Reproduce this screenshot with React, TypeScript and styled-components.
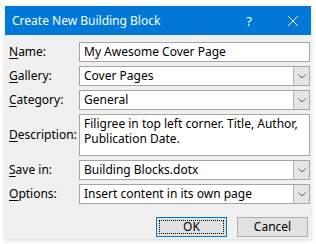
import styled, { createGlobalStyle } from 'styled-components';

const GlobalStyle = createGlobalStyle`
  html, body {
    margin: 0;
    padding: 0;
    background: #ffffff;
  }
  body {
    font-family: "Noto Sans", "Open Sans", Arial, sans-serif;
  }
`;

const Page = styled.div`
  padding: 6px 5px 0 5px;
  width: 316px;
  height: 244px;
  box-sizing: border-box;
`;

const Dialog = styled.div`
  width: 306px;
  background: #f0f0f0;
  box-shadow: 0 1px 4px rgba(0, 0, 0, 0.18);
`;

const TitleBar = styled.div`
  display: flex;
  align-items: center;
  height: 29px;
  background: #0078d7;
  color: #ffffff;
  padding: 0 13px 0 7px;
  font-size: 12px;
`;

const Title = styled.div`
  flex: 1;
`;

const HelpGlyph = styled.span`
  font-size: 13px;
  margin-right: 36px;
`;

const Body = styled.div`
  padding: 7px 1px 2px 4px;
`;

const Form = styled.div`
  display: grid;
  grid-template-columns: 70px 1fr;
  row-gap: 4px;
  align-items: center;
`;

const Label = styled.label`
  font-size: 12px;
  line-height: 16px;
  color: #000000;
  u {
    text-decoration: underline;
    text-underline-offset: 2px;
  }
`;

const Field = styled.div<{ $tall?: boolean }>`
  display: flex;
  align-items: ${(p) => (p.$tall ? 'flex-start' : 'center')};
  height: ${(p) => (p.$tall ? '42px' : '20px')};
  box-sizing: border-box;
  border: 1px solid #a5a5a5;
  background: #ffffff;
  font-size: 12px;
  color: #000000;
  line-height: ${(p) => (p.$tall ? '15px' : '16px')};
  padding: ${(p) => (p.$tall ? '1px 4px' : '0 0 0 4px')};
`;

const FieldText = styled.span`
  flex: 1;
  white-space: nowrap;
`;

const DropButton = styled.span`
  display: flex;
  align-items: center;
  justify-content: center;
  width: 16px;
  height: 100%;
  box-sizing: border-box;
  background: #e5e5e5;
  border-left: 1px solid #b5b5b5;
`;

const Buttons = styled.div`
  display: flex;
  justify-content: flex-end;
  gap: 10px;
  margin-top: 13px;
  padding-right: 2px;
`;

const Button = styled.button<{ $primary?: boolean }>`
  width: 71px;
  height: 20px;
  box-sizing: border-box;
  padding: 0;
  font-family: inherit;
  font-size: 12px;
  line-height: 16px;
  color: #000000;
  background: #e1e1e1;
  border: 1px solid ${(p) => (p.$primary ? '#0078d7' : '#adadad')};
  display: flex;
  align-items: center;
  justify-content: center;
`;

const FocusRing = styled.span`
  display: flex;
  align-items: center;
  justify-content: center;
  width: calc(100% - 4px);
  height: calc(100% - 4px);
  box-sizing: border-box;
  border: 1px dotted #000000;
`;

const Chevron = () => (
  <svg width="8" height="5" viewBox="0 0 8 5">
    <polyline points="0.5,0.5 4,4 7.5,0.5" fill="none" stroke="#606060" strokeWidth="1" />
  </svg>
);

const CloseIcon = () => (
  <svg width="10" height="10" viewBox="0 0 10 10">
    <line x1="0" y1="0" x2="10" y2="10" stroke="#ffffff" strokeWidth="1" />
    <line x1="10" y1="0" x2="0" y2="10" stroke="#ffffff" strokeWidth="1" />
  </svg>
);

const Select = ({ value }: { value: string }) => (
  <Field>
    <FieldText>{value}</FieldText>
    <DropButton>
      <Chevron />
    </DropButton>
  </Field>
);

const App = () => (
  <>
    <GlobalStyle />
    <Page>
      <Dialog>
        <TitleBar>
          <Title>Create New Building Block</Title>
          <HelpGlyph>?</HelpGlyph>
          <CloseIcon />
        </TitleBar>
        <Body>
          <Form>
            <Label>
              <u>N</u>ame:
            </Label>
            <Field>
              <FieldText>My Awesome Cover Page</FieldText>
            </Field>
            <Label>
              <u>G</u>allery:
            </Label>
            <Select value="Cover Pages" />
            <Label>
              <u>C</u>ategory:
            </Label>
            <Select value="General" />
            <Label>
              <u>D</u>escription:
            </Label>
            <Field $tall>
              <span>
                Filigree in top left corner. Title, Author,
                <br />
                Publication Date.
              </span>
            </Field>
            <Label>
              <u>S</u>ave in:
            </Label>
            <Select value="Building Blocks.dotx" />
            <Label>
              <u>O</u>ptions:
            </Label>
            <Select value="Insert content in its own page" />
          </Form>
          <Buttons>
            <Button $primary>
              <FocusRing>OK</FocusRing>
            </Button>
            <Button>Cancel</Button>
          </Buttons>
        </Body>
      </Dialog>
    </Page>
  </>
);

export default App;
